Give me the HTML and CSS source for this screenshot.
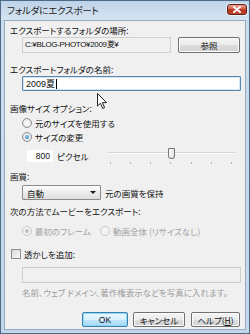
FILE: index.html
```html
<!DOCTYPE html>
<html lang="ja">
<head>
<meta charset="utf-8">
<link rel="stylesheet" href="styles.css">
</head>
<body>
<div class="window">
  <div class="titlebar">
    <span class="title">フォルダにエクスポート</span>
    <span class="close"><svg width="10" height="7" viewBox="0 0 10 7"><path d="M2 1 L8 6 M8 1 L2 6" stroke="#fff" stroke-width="2" stroke-linecap="round"/></svg></span>
  </div>
  <div class="client">
    <div class="label">エクスポートするフォルダの場所:</div>
    <div class="row loc">
      <div class="path">C:¥BLOG-PHOTO¥2009夏¥</div>
      <div class="btn browse">参照</div>
    </div>
    <div class="label l2">エクスポートフォルダの名前:</div>
    <div class="name">2009夏<span class="caret"></span></div>
    <div class="label l3">画像サイズ オプション:</div>
    <div class="radio-row r1"><span class="radio"></span>元のサイズを使用する</div>
    <div class="radio-row"><span class="radio on"></span>サイズの変更</div>
    <div class="row sizerow">
      <div class="px">800</div><span class="pxl">ピクセル</span>
      <div class="slider">
        <div class="track"></div>
        <div class="thumb"></div>
        <div class="ticks"><i></i><i></i><i></i><i></i><i></i><i></i><i></i></div>
      </div>
    </div>
    <div class="label q">画質:</div>
    <div class="row qrow">
      <div class="select">自動<span class="arrow"></span></div>
      <span class="qnote">元の画質を保持</span>
    </div>
    <div class="label mv">次の方法でムービーをエクスポート:</div>
    <div class="row mvrow dis">
      <span class="radio-row first"><span class="radio on dim"></span>最初のフレーム</span>
      <span class="radio-row r-all"><span class="radio dim"></span>動画全体 (リサイズなし)</span>
    </div>
    <div class="check-row"><span class="check"></span>透かしを追加:</div>
    <div class="wm"></div>
    <div class="hint">名前、ウェブ ドメイン、著作権表示などを写真に入れます。</div>
    <div class="row buttons">
      <div class="btn ok">OK</div>
      <div class="btn cancel">キャンセル</div>
      <div class="btn help">ヘルプ(<u>H</u>)</div>
    </div>
  </div>
  <svg class="cursor" width="11" height="17" viewBox="0 0 11 17"><path d="M0.5 0.5 L0.5 13 L3.5 10.2 L5.7 15.5 L7.6 14.7 L5.5 9.6 L9.5 9.6 Z" fill="#fff" stroke="#222" stroke-width="1" stroke-linejoin="round"/></svg>
</div>
</body>
</html>
```
FILE: styles.css
```css
* { box-sizing: border-box; }
html, body { margin: 0; padding: 0; }
body { width: 250px; height: 334px; overflow: hidden; font-family: "Noto Sans CJK JP", "Noto Sans", sans-serif; font-size: 8.5px; font-feature-settings: "palt"; color: #111; white-space: nowrap; }
.window { position: relative; width: 250px; height: 334px; background: linear-gradient(#b7cfe6, #cbdcec 25px, #c3d7ea); border: 1px solid #4f6a84; padding: 0 3px 3px 3px; display: flex; flex-direction: column; }
.titlebar { height: 19px; margin: 0 -3px; display: flex; align-items: center; justify-content: space-between; padding: 0 2px 2px 6px; background: linear-gradient(#bdd3e8, #d6e4f1); }
.title { font-size: 9.5px; letter-spacing: -0.2px; color: #1e1e1e; }
.close { width: 20px; height: 11px; border: 1px solid #5e2219; border-radius: 3px; background: linear-gradient(#eba394, #cf5a43 45%, #b53119 55%, #c8452d); display: flex; align-items: center; justify-content: center; box-shadow: 0 0 0 1px rgba(255,255,255,0.5); }
.client { flex: 1; background: #f0f0f0; border: 1px solid #93a9bf; padding: 2px 4px 0 5px; display: flex; flex-direction: column; }
.row { display: flex; align-items: center; }
.label { height: 14px; line-height: 14px; }
.loc { margin: 0 0 0 12px; height: 16px; }
.path { width: 149px; height: 16px; line-height: 14px; border: 1px solid #d0d0d0; background: #f0f0f0; padding-left: 2px; font-family: "Liberation Sans", sans-serif; font-size: 8px; letter-spacing: -0.35px; }
.btn { height: 15px; border: 1px solid #707070; border-radius: 2px; background: linear-gradient(#f4f4f4, #ebebeb 50%, #dddddd 51%, #d2d2d2); box-shadow: inset 0 0 0 1px #fcfcfc; display: flex; align-items: center; justify-content: center; font-size: 8.5px; }
.browse { width: 62px; height: 16px; margin-left: 7px; }
.l2 { margin-top: 9px; }
.name { margin-left: 12px; height: 15px; border: 1px solid #5c87ad; border-radius: 1px; background: #fff; box-shadow: inset 0 0 0 1px #d3e3f1; padding-left: 3px; font-family: "Liberation Sans", "Noto Sans CJK JP", sans-serif; font-size: 9px; display: flex; align-items: center; }
.caret { display: inline-block; width: 1px; height: 10px; background: #000; margin-left: 1px; }
.l3 { margin-top: 10px; }
.radio-row { display: flex; align-items: center; height: 14px; margin-left: 12px; }
.r1 { margin-top: 1px; }
.radio { width: 10px; height: 10px; border-radius: 50%; border: 1px solid #8e8f8f; background: radial-gradient(#ffffff, #e6e6e6 70%, #d6d6d6); margin-right: 3px; position: relative; flex: none; }
.radio.on::after { content: ""; position: absolute; left: 2px; top: 2px; width: 4px; height: 4px; border-radius: 50%; background: radial-gradient(circle at 40% 35%, #8fd0f5, #1c6eae); }
.radio.dim { border-color: #c8c8c8; background: #f3f3f3; }
.radio.on.dim::after { background: #c2c2c2; }
.sizerow { margin: 6px 0 0 17px; height: 12px; }
.px { width: 26px; height: 12px; background: #fff; text-align: right; padding-right: 3px; line-height: 12px; font-family: "Liberation Sans", sans-serif; font-size: 8.5px; }
.pxl { margin-left: 4px; }
.slider { position: relative; margin-left: auto; margin-right: 6px; width: 128px; height: 12px; }
.track { position: absolute; left: 0; right: 0; top: 2px; height: 2px; background: #d4d4d4; border-bottom: 1px solid #fbfbfb; }
.thumb { position: absolute; left: 61px; top: -2px; width: 7px; height: 11px; border: 1px solid #767676; border-radius: 1px 1px 4px 4px; background: linear-gradient(90deg, #fbfbfb, #e3e3e3); }
.ticks { position: absolute; left: 3px; right: 3px; top: 12px; display: flex; justify-content: space-between; }
.ticks i { width: 1px; height: 2px; background: #b0b0b0; }
.q { margin-top: 7px; }
.qrow { margin: 2px 0 0 12px; height: 15px; }
.select { width: 79px; height: 15px; border: 1px solid #8a8a8a; border-radius: 1px; background: linear-gradient(#fbfbfb, #ececec 50%, #dedede); padding-left: 4px; display: flex; align-items: center; position: relative; }
.arrow { position: absolute; right: 4px; top: 5px; border-left: 3px solid transparent; border-right: 3px solid transparent; border-top: 3px solid #1a1a1a; }
.qnote { margin-left: 4px; }
.mv { margin-top: 4px; }
.mvrow { margin-top: 6px; height: 14px; }
.dis { color: #a2a2a2; }
.mvrow .first { margin-left: 12px; width: 78px; }
.mvrow .r-all { margin-left: 0; }
.check-row { display: flex; align-items: center; margin-top: 9px; height: 14px; }
.check { width: 10px; height: 10px; border: 1px solid #8e8f8f; background: linear-gradient(135deg, #d9d9d9, #f8f8f8); margin: 0 3px 0 1px; }
.wm { margin: 6px 0 0 12px; height: 16px; border: 1px solid #cdcdcd; background: #f0f0f0; }
.hint { margin: 2px 0 0 12px; color: #9c9c9c; font-size: 8.5px; height: 14px; line-height: 14px; }
.buttons { margin-top: auto; margin-bottom: 2px; margin-right: 1px; justify-content: flex-end; }
.ok { width: 46px; border-color: #3c7fb1; box-shadow: inset 0 0 0 1px #8fd6f7; background: linear-gradient(#eaf6fd, #d9f0fc 50%, #bee6fd 51%, #a7d9f5); font-family: "Liberation Sans", sans-serif; }
.cancel { width: 52px; margin-left: 5px; }
.help { width: 49px; margin-left: 6px; }
.cursor { position: absolute; left: 96px; top: 92px; }
```
